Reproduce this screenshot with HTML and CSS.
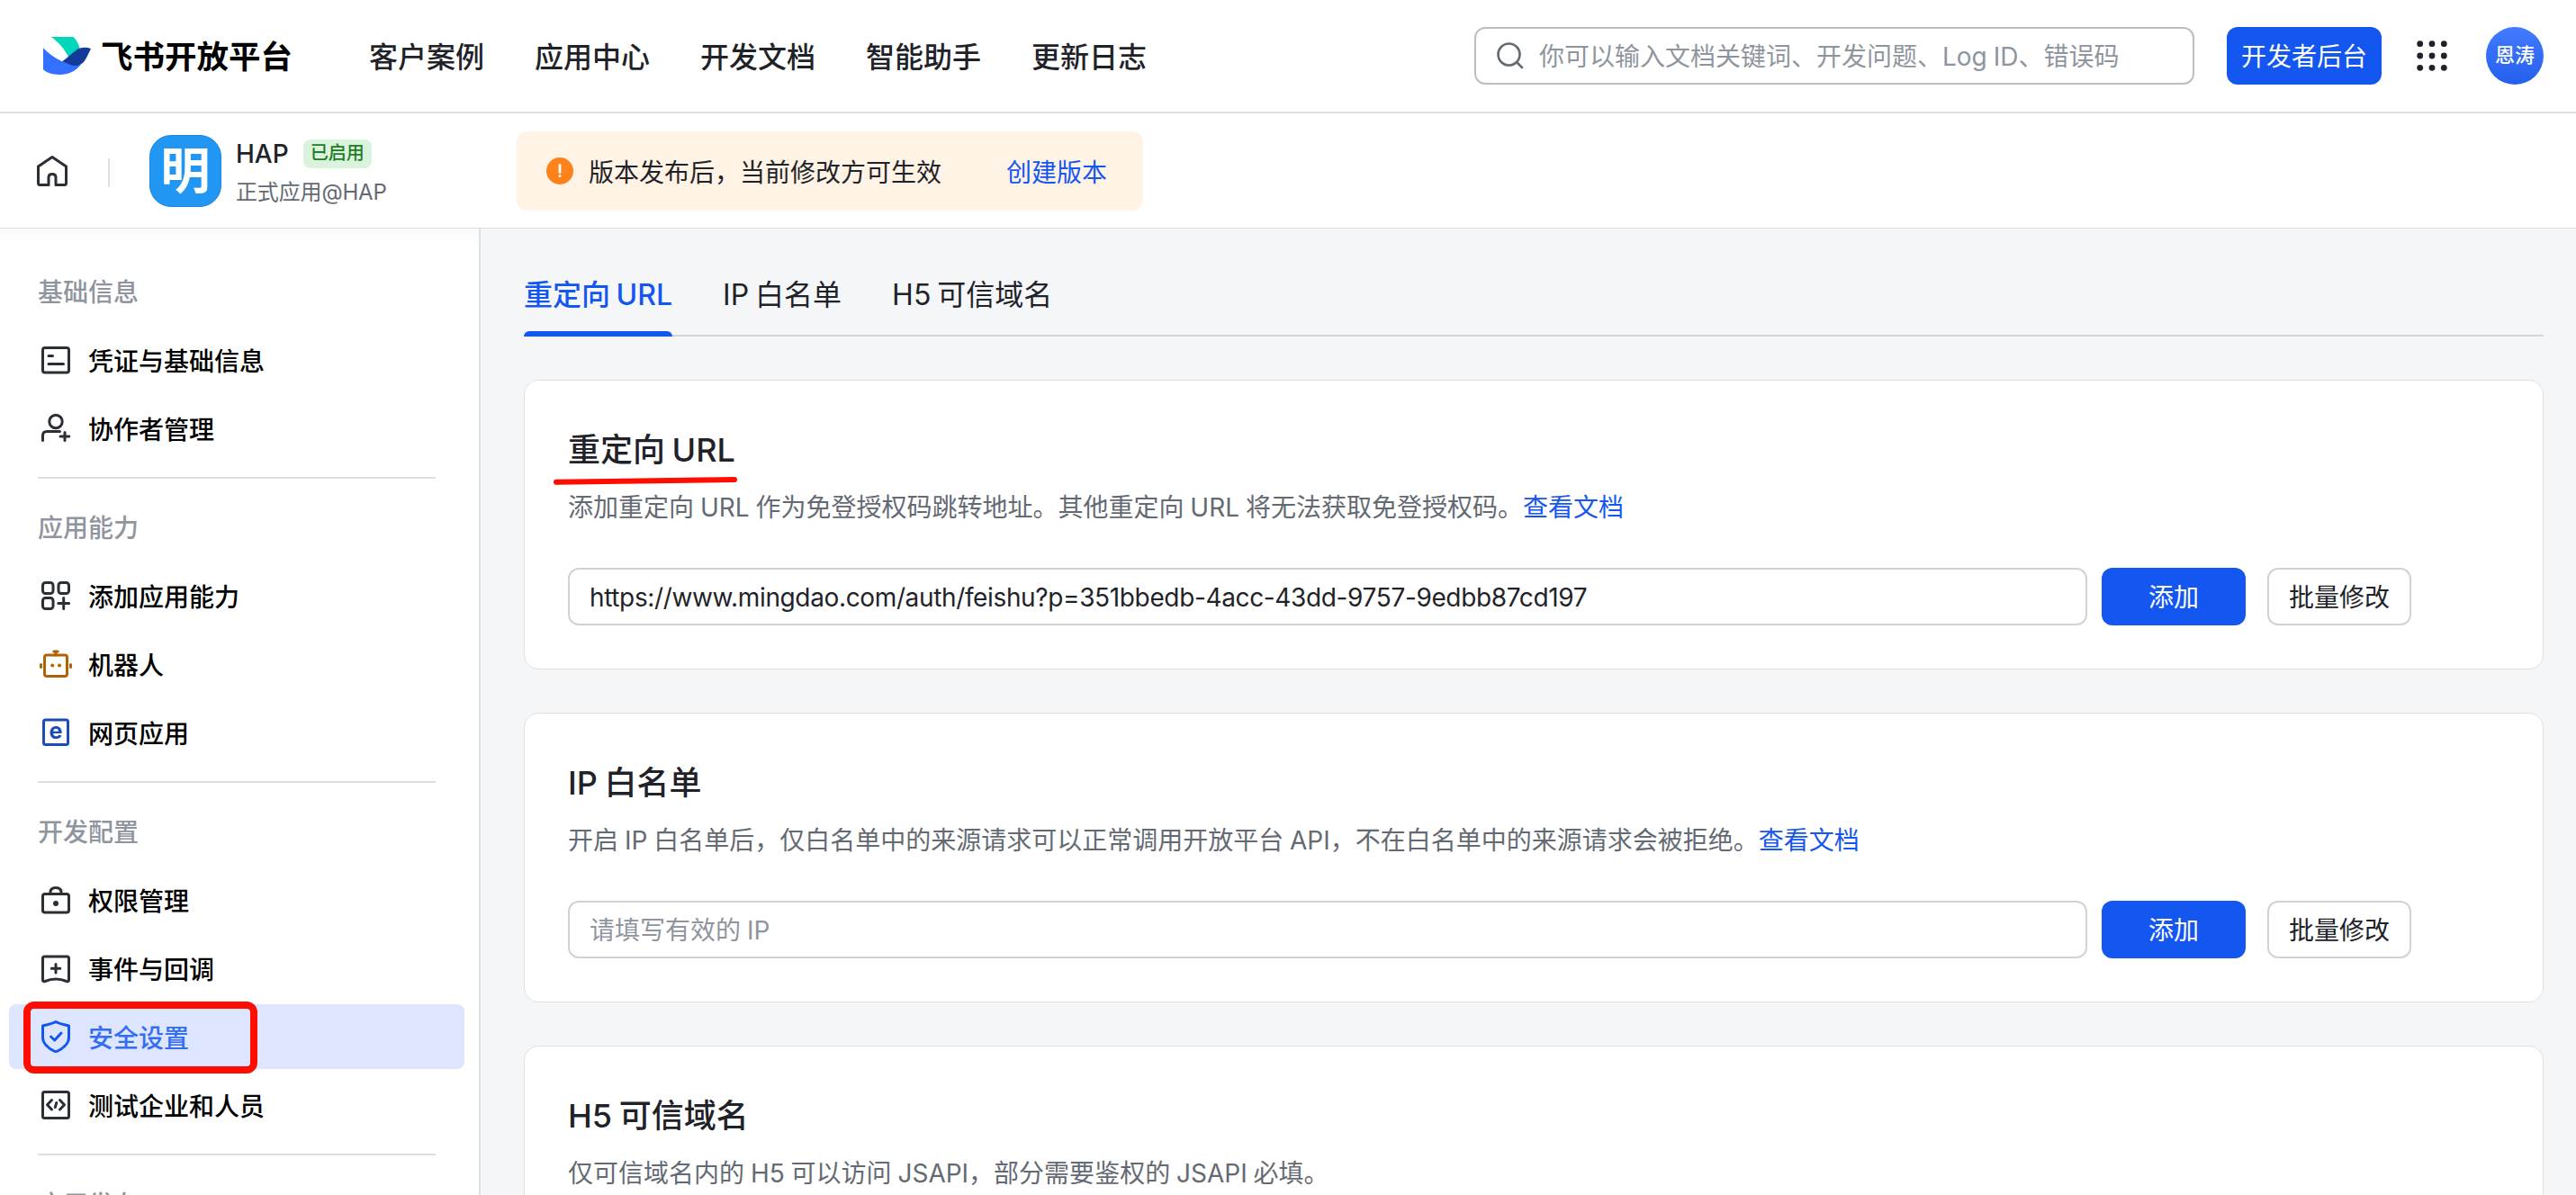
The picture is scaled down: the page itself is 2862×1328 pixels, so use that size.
FILE: index.html
```html
<!DOCTYPE html>
<html lang="zh-CN">

<head>
  <meta charset="UTF-8" />
  <meta name="viewport" content="width=device-width, initial-scale=1.0" />
  <title>安全设置 - 飞书开放平台</title>
  <link rel="stylesheet" href="styles.css">
</head>

<body>
  <header class="header">
    <a class="logo">
      <svg width="54" height="44" viewBox="0 0 54 44">
        <path d="M8.500 1H33.500C37 4.500 39.500 9 40.500 14L28.500 24C24 15.500 18 7 8.500 1Z" fill="#00d6b9" />
        <path d="M0 13.300C6 19.500 13 24.500 21 28.300C27 31.500 33 33 42 31.500C36 39.500 27 43 18.500 43C11 43 4 41 0 37.300Z" fill="#3370ff" />
        <path d="M53 14C47 12 41 12.500 37 15.500C31 19.500 27 24.500 21 28.300C27 31.500 32 33 36 33C46 32.500 48 24 53 14Z" fill="#133c9a" />
      </svg>
      <span>飞书开放平台</span>
    </a>
    <nav class="nav">
      <a>客户案例</a>
      <a>应用中心</a>
      <a>开发文档</a>
      <a>智能助手</a>
      <a>更新日志</a>
    </nav>
    <div class="search">
      <svg class="search-icon" width="32" height="32" viewBox="0 0 32 32">
        <circle cx="14.500" cy="14.500" r="12" />
        <path d="M23.500 23.500L29 29" />
      </svg>
      <span>你可以输入文档关键词、开发问题、Log ID、错误码</span>
    </div>
    <button class="button primary console">开发者后台</button>
    <svg class="apps" width="34" height="34" viewBox="0 0 34 34">
      <circle cx="3.700" cy="3.700" r="3.400" /><circle cx="17" cy="3.700" r="3.400" /><circle cx="30.300" cy="3.700" r="3.400" />
      <circle cx="3.700" cy="17" r="3.400" /><circle cx="17" cy="17" r="3.400" /><circle cx="30.300" cy="17" r="3.400" />
      <circle cx="3.700" cy="30.300" r="3.400" /><circle cx="17" cy="30.300" r="3.400" /><circle cx="30.300" cy="30.300" r="3.400" />
    </svg>
    <div class="avatar">恩涛</div>
  </header>

  <div class="app-bar">
    <svg class="icon home" width="36" height="36" viewBox="0 0 36 36">
      <path d="M2.500 13L18 2.500L33.500 13V31.500Q33.500 33.500 31.500 33.500H22V25Q22 21.500 18 21.500T14 25V33.500H4.500Q2.500 33.500 2.500 31.500Z" />
    </svg>
    <div class="app-divider"></div>
    <div class="app-icon">明</div>
    <div class="app-info">
      <div class="app-name">HAP <span class="tag">已启用</span></div>
      <div class="app-type">正式应用@HAP</div>
    </div>
    <div class="alert">
      <svg width="30" height="30" viewBox="0 0 30 30">
        <circle cx="15" cy="15" r="15" fill="#ff811a" />
        <path d="M15 8.500V16.500M15 20.300V20.700" stroke="#fff" stroke-width="2.800" stroke-linecap="round" />
      </svg>
      <span>版本发布后，当前修改方可生效</span>
      <a class="link">创建版本</a>
    </div>
  </div>

  <div class="layout">
    <aside class="sidebar">
      <div class="menu-title">基础信息</div>
      <a class="menu-item">
        <svg class="icon" width="36" height="36" viewBox="0 0 36 36">
          <rect x="3.500" y="4.500" width="29" height="27.500" rx="2.500" />
          <path d="M10 13.500H14.500M10 22.500H26.500" />
        </svg>
        凭证与基础信息
      </a>
      <a class="menu-item">
        <svg class="icon" width="36" height="36" viewBox="0 0 36 36">
          <circle cx="18" cy="10.500" r="7.200" />
          <path d="M3.500 31.500V26Q3.500 21.500 8 21.500H22.500M28 22.500V31.500M23 27H32.800" />
        </svg>
        协作者管理
      </a>
      <div class="menu-divider"></div>

      <div class="menu-title">应用能力</div>
      <a class="menu-item">
        <svg class="icon" width="36" height="36" viewBox="0 0 36 36">
          <rect x="3.500" y="3.500" width="11.500" height="12" rx="3" />
          <rect x="21" y="3.500" width="11.500" height="12" rx="3" />
          <rect x="3.500" y="20.500" width="11.500" height="12" rx="3" />
          <path d="M26.700 20.500V32.500M20.800 26.500H32.600" />
        </svg>
        添加应用能力
      </a>
      <a class="menu-item">
        <svg class="icon icon-bot" width="36" height="36" viewBox="0 0 36 36">
          <rect x="5.500" y="8" width="25" height="23.500" rx="2.500" />
          <path d="M18 8V4.500M15.800 4H20.200M1.500 18.500V21.500M34.500 18.500V21.500" />
          <circle class="dot" cx="14.200" cy="19.600" r="2" />
          <circle class="dot" cx="22" cy="19.600" r="2" />
        </svg>
        机器人
      </a>
      <a class="menu-item">
        <svg class="icon icon-web" width="36" height="36" viewBox="0 0 36 36">
          <rect x="4.500" y="4" width="27" height="27.500" rx="2" />
          <text x="18" y="24.500" text-anchor="middle">e</text>
        </svg>
        网页应用
      </a>
      <div class="menu-divider"></div>

      <div class="menu-title">开发配置</div>
      <a class="menu-item">
        <svg class="icon" width="36" height="36" viewBox="0 0 36 36">
          <rect x="3.500" y="11.500" width="29" height="20.500" rx="2.500" />
          <path d="M12 11V9.500Q12 4.500 18 4.500T24 9.500V11" />
          <circle class="dot" cx="18" cy="22" r="3" />
        </svg>
        权限管理
      </a>
      <a class="menu-item">
        <svg class="icon" width="36" height="36" viewBox="0 0 36 36">
          <path d="M3.500 31V7Q3.500 5 5.500 5H30.500Q32.500 5 32.500 7V31Q32.500 33.300 30 32.500Q18 27.500 6 32.500Q3.500 33.300 3.500 31Z" />
          <path d="M18 13.500V23M13.200 18.200H22.800" />
        </svg>
        事件与回调
      </a>
      <a class="menu-item active">
        <svg class="icon" width="36" height="36" viewBox="0 0 36 36">
          <path d="M18 1.500C22.500 3.800 27 4.500 32.500 6V19C32.500 26 25 31.500 20 34Q18 35 16 34C11 31.500 3.500 26 3.500 19V6C9 4.500 13.500 3.800 18 1.500Z" />
          <path d="M12.500 18L16.700 22L24 14" />
        </svg>
        安全设置
        <span class="mark-box"></span>
      </a>
      <a class="menu-item">
        <svg class="icon" width="36" height="36" viewBox="0 0 36 36">
          <rect x="3.500" y="3.500" width="29" height="29" rx="2" />
          <path d="M13.500 12.500L8.500 17.800L13.500 23M22.500 12.500L27.500 17.800L22.500 23M18.800 15.500L17.300 20.500" />
        </svg>
        测试企业和人员
      </a>
      <div class="menu-divider"></div>

      <div class="menu-title">应用发布</div>
    </aside>

    <main class="main">
      <div class="tabs">
        <a class="tab active">重定向 URL</a>
        <a class="tab">IP 白名单</a>
        <a class="tab">H5 可信域名</a>
      </div>

      <section class="card">
        <h2>重定向 URL
          <svg class="mark-line" width="206" height="12" viewBox="0 0 206 12">
            <path d="M4 7.700L202 5" />
          </svg>
        </h2>
        <p>添加重定向 URL 作为免登授权码跳转地址。其他重定向 URL 将无法获取免登授权码。<a class="link">查看文档</a></p>
        <div class="form-row">
          <div class="input url">https://www.mingdao.com/auth/feishu?p=351bbedb-4acc-43dd-9757-9edbb87cd197</div>
          <button class="button primary">添加</button>
          <button class="button default">批量修改</button>
        </div>
      </section>

      <section class="card">
        <h2>IP 白名单</h2>
        <p>开启 IP 白名单后，仅白名单中的来源请求可以正常调用开放平台 API，不在白名单中的来源请求会被拒绝。<a class="link">查看文档</a></p>
        <div class="form-row">
          <div class="input placeholder">请填写有效的 IP</div>
          <button class="button primary">添加</button>
          <button class="button default">批量修改</button>
        </div>
      </section>

      <section class="card">
        <h2>H5 可信域名</h2>
        <p>仅可信域名内的 H5 可以访问 JSAPI，部分需要鉴权的 JSAPI 必填。</p>
        <div class="form-row">
          <div class="input placeholder"></div>
        </div>
      </section>
    </main>
  </div>
</body>

</html>
```
FILE: styles.css
```css
* {
  box-sizing: border-box;
}

html,
body {
  margin: 0;
  padding: 0;
  height: 100%;
  overflow: hidden;
}

body {
  display: flex;
  flex-direction: column;
  font-family: Inter, "Noto Sans CJK SC", sans-serif;
  font-size: 28px;
  word-spacing: -1px;
  color: #1f2329;
  background: #fff;
  white-space: nowrap;
}

svg {
  flex-shrink: 0;
}

.link {
  color: #1456f0;
}

.button {
  width: 160px;
  height: 64px;
  padding: 0 0 2px;
  border: none;
  border-radius: 12px;
  font-family: inherit;
  font-size: 28px;
  flex-shrink: 0;
}

.button.primary {
  background: #1456f0;
  color: #fff;
}

.button.default {
  margin-left: 8px;
  background: #fff;
  border: 2px solid #d0d3d6;
  color: #1f2329;
}

/* top header */
.header {
  display: flex;
  align-items: center;
  height: 126px;
  flex-shrink: 0;
  padding: 0 36px 0 48px;
  border-bottom: 2px solid #dee0e3;
}

.logo {
  display: flex;
  align-items: center;
  gap: 10px;
  width: 362px;
  font-size: 35.5px;
  font-weight: 700;
  color: #000;
}

.logo span {
  padding-bottom: 3px;
}

.nav {
  display: flex;
  gap: 56px;
  padding-bottom: 3px;
  font-size: 32px;
  font-weight: 500;
}

.search {
  display: flex;
  align-items: center;
  gap: 16px;
  width: 800px;
  height: 64px;
  margin-left: auto;
  padding-left: 22px;
  border: 2px solid #bbbfc4;
  border-radius: 12px;
  color: #8f959e;
}

.search span {
  padding-bottom: 2px;
}

.search-icon {
  fill: none;
  stroke: #646a73;
  stroke-width: 2.6;
  stroke-linecap: round;
}

.console {
  width: 172px;
  margin-left: 36px;
}

.apps {
  margin: 0 43px 0 39px;
  fill: #1f2329;
}

.avatar {
  width: 64px;
  height: 64px;
  border-radius: 50%;
  background: linear-gradient(#437aff, #2460ec);
  color: #fff;
  font-size: 22px;
  font-weight: 500;
  line-height: 62px;
  text-align: center;
}

/* app bar */
.app-bar {
  display: flex;
  align-items: center;
  height: 128px;
  flex-shrink: 0;
  padding-left: 40px;
  border-bottom: 1px solid #dee0e3;
}

.icon {
  fill: none;
  stroke: #2b2f36;
  stroke-width: 3;
  stroke-linecap: round;
  stroke-linejoin: round;
}

.icon .dot {
  fill: #2b2f36;
  stroke: none;
}

.app-divider {
  width: 2px;
  height: 32px;
  margin: 4px 44px 0;
  background: #dee0e3;
}

.app-icon {
  width: 80px;
  height: 80px;
  border: 1px solid #1f88dc;
  border-radius: 24px;
  background: #2196f3;
  color: #fff;
  font-size: 55px;
  font-weight: 700;
  line-height: 76px;
  text-align: center;
}

.app-info {
  width: 312px;
  margin-left: 16px;
  padding-top: 6px;
}

.app-name {
  display: flex;
  align-items: center;
  gap: 16px;
  height: 40px;
  font-weight: 500;
}

.tag {
  height: 32px;
  padding: 0 8px;
  border-radius: 8px;
  background: #d9f3dc;
  color: #237b28;
  font-size: 20px;
  line-height: 31px;
}

.app-type {
  height: 44px;
  color: #646a73;
  font-size: 24px;
  letter-spacing: -0.15px;
  line-height: 46px;
}

.alert {
  display: flex;
  align-items: center;
  width: 696px;
  height: 88px;
  padding-left: 33px;
  border-radius: 12px;
  background: #fff3e5;
}

.alert span {
  margin: 0 72px 0 17px;
}

/* sidebar */
.layout {
  display: flex;
  flex: 1;
  min-height: 0;
}

.sidebar {
  display: flex;
  flex-direction: column;
  gap: 4px;
  width: 534px;
  flex-shrink: 0;
  padding: 34px 16px 0 10px;
  border-right: 2px solid #dee0e3;
  background: linear-gradient(#fafafa, #fff 18px);
  overflow: hidden;
}

.menu-title {
  height: 72px;
  flex-shrink: 0;
  padding-left: 32px;
  color: #8f959e;
  font-weight: 500;
  line-height: 75px;
}

.menu-item {
  position: relative;
  display: flex;
  align-items: center;
  gap: 18px;
  height: 72px;
  flex-shrink: 0;
  padding-left: 34px;
  border-radius: 8px;
  color: #000;
  font-weight: 500;
}

.menu-item.active {
  background: #dde5ff;
  color: #336df4;
}

.menu-item.active .icon {
  stroke: #1456f0;
}

.menu-divider {
  height: 2px;
  flex-shrink: 0;
  margin: 14px 32px;
  background: #dcdddf;
}

.icon-bot {
  stroke: #b26206;
}

.icon-bot .dot {
  fill: #b26206;
}

.icon-web {
  stroke: #1c4cba;
}

.icon-web text {
  fill: #1c4cba;
  stroke: none;
  font-size: 25px;
  font-weight: 700;
}

/* red annotations */
.mark-box {
  position: absolute;
  left: 16px;
  top: -3px;
  width: 260px;
  height: 80px;
  border: 8px solid #ff0d00;
  border-radius: 12px;
}

.mark-line {
  position: absolute;
  left: -17px;
  top: 57px;
  fill: none;
  stroke: #ff0d00;
  stroke-width: 6;
  stroke-linecap: round;
}

/* content */
.main {
  flex: 1;
  min-width: 0;
  padding: 0 36px 0 48px;
  background: #f5f6f8;
  overflow: hidden;
}

.tabs {
  display: flex;
  gap: 56px;
  height: 120px;
  margin-bottom: 48px;
  border-bottom: 2px solid #d3d6d9;
}

.tab {
  position: relative;
  padding-top: 2px;
  font-size: 32px;
  line-height: 144px;
  word-spacing: -2px;
}

.tab.active {
  color: #1456f0;
  font-weight: 500;
}

.tab.active::after {
  content: "";
  position: absolute;
  left: 0;
  right: 0;
  top: 114px;
  height: 6px;
  border-radius: 6px 6px 0 0;
  background: #1456f0;
}

.card {
  height: 322px;
  margin-bottom: 48px;
  padding: 48px;
  border: 1px solid #dee0e3;
  border-radius: 16px;
  background: #fff;
}

.card h2 {
  position: relative;
  height: 56px;
  margin: 0 0 14px;
  font-size: 36px;
  font-weight: 500;
  line-height: 58px;
  word-spacing: -2px;
}

.card p {
  height: 44px;
  margin: 0 0 46px;
  color: #646a73;
  line-height: 46px;
}

.form-row {
  display: flex;
  gap: 16px;
}

.input {
  width: 1688px;
  height: 64px;
  padding-left: 22px;
  border: 2px solid #d0d3d6;
  border-radius: 12px;
  line-height: 62px;
}

.input.url {
  letter-spacing: -0.36px;
}

.input.placeholder {
  color: #8f959e;
}
```
